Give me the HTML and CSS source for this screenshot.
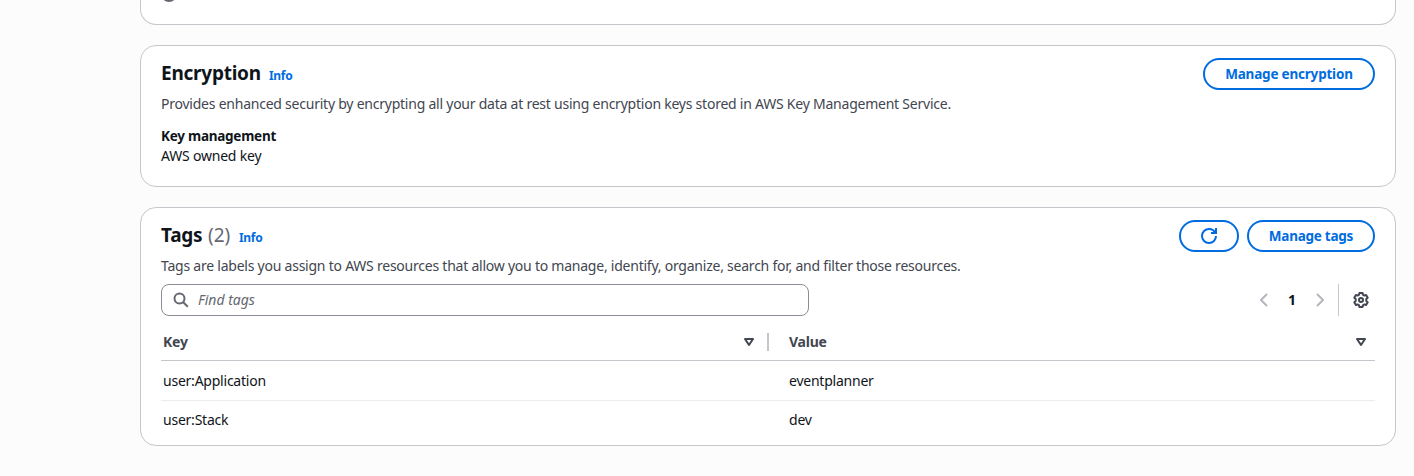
FILE: index.html
```html
<!DOCTYPE html>
<html lang="en">
<head>
<meta charset="utf-8">
<title>Encryption and tags</title>
<link rel="stylesheet" href="styles.css">
</head>
<body>
<main class="page">
  <section class="card card-previous">
    <svg class="status-icon" viewBox="0 0 16 16"><circle cx="8" cy="8" r="7"/><path d="M5 8h6"/></svg>
  </section>

  <section class="card card-encryption">
    <header class="card-header">
      <div class="title-row"><h2 class="title title-encryption">Encryption</h2><a class="info">Info</a></div>
      <button class="button button-encryption">Manage encryption</button>
    </header>
    <p class="description">Provides enhanced security by encrypting all your data at rest using encryption keys stored in AWS Key Management Service.</p>
    <dl class="pair">
      <dt>Key management</dt>
      <dd>AWS owned key</dd>
    </dl>
  </section>

  <section class="card card-tags">
    <header class="card-header">
      <div class="title-row"><h2 class="title title-tags">Tags</h2><span class="counter">(2)</span><a class="info">Info</a></div>
      <div class="actions">
        <button class="button button-refresh" aria-label="Refresh">
          <svg class="icon" viewBox="0 0 16 16"><path d="M10 5h5V0"/><path d="M15 8a6.957 6.957 0 0 1-7 7 6.957 6.957 0 0 1-7-7 6.957 6.957 0 0 1 7-7 6.87 6.87 0 0 1 6.3 4"/></svg>
        </button>
        <button class="button button-tags">Manage tags</button>
      </div>
    </header>
    <p class="description">Tags are labels you assign to AWS resources that allow you to manage, identify, organize, search for, and filter those resources.</p>
    <div class="tools">
      <div class="search">
        <svg class="icon search-icon" viewBox="0 0 16 16"><circle cx="6.500" cy="6.500" r="5"/><path d="m10.2 10.2 4.600 4.600"/></svg>
        <span class="placeholder">Find tags</span>
      </div>
      <div class="pagination">
        <svg class="icon arrow" viewBox="0 0 16 16"><path d="M11 2 5 8l6 6"/></svg>
        <span class="page-number">1</span>
        <svg class="icon arrow" viewBox="0 0 16 16"><path d="m5 2 6 6-6 6"/></svg>
        <span class="separator"></span>
        <svg class="icon gear" viewBox="0 0 16 16"><path d="M6.4 1h3.200l.3 1.700 1.500.9 1.700-.6 1.600 2.700L13.300 6.900v2.200l1.400 1.200-1.600 2.700-1.700-.6-1.500.9-.3 1.700H6.400l-.3-1.700-1.500-.9-1.700.6-1.600-2.700 1.400-1.200V6.900L1.300 5.700 2.900 3l1.700.6 1.500-.9z"/><circle cx="8" cy="8" r="2"/></svg>
      </div>
    </div>
    <div class="table">
      <div class="row head">
        <div class="cell cell-key"><span>Key</span><svg class="icon caret" viewBox="0 0 16 16"><path d="M4 5h8l-4 6z"/></svg></div>
        <div class="cell"><span>Value</span><svg class="icon caret" viewBox="0 0 16 16"><path d="M4 5h8l-4 6z"/></svg></div>
      </div>
      <div class="row data first"><div class="cell">user:Application</div><div class="cell">eventplanner</div></div>
      <div class="row data"><div class="cell">user:Stack</div><div class="cell">dev</div></div>
    </div>
  </section>
</main>
</body>
</html>
```
FILE: styles.css
```css
* { box-sizing: border-box; }
body {
  margin: 0;
  height: 476px;
  overflow: hidden;
  background: #fcfcfd;
  color: #0f141a;
  font: 14px/20px "Noto Sans", "Open Sans", sans-serif;
}
h2, p, dl, dd { margin: 0; }
.page { display: flex; flex-direction: column; gap: 20px; padding: 0 18px 0 140px; }
.card { background: #fff; border: 1px solid #c6c6cd; border-radius: 16px; padding: 12px 20px 0; }
.card-previous { height: 25px; border-top: 0; border-radius: 0 0 16px 16px; padding-top: 0; overflow: hidden; }
.status-icon { display: block; width: 16px; height: 16px; margin-top: -14px; fill: none; stroke: #656871; stroke-width: 2; }
.card-encryption { height: 142px; }
.card-tags { height: 239px; }
.card-header { display: flex; justify-content: space-between; height: 32px; }
.title-row { display: flex; align-items: baseline; padding-top: 3px; }
.title { font-size: 19px; line-height: 24px; font-weight: 700; letter-spacing: -0.25px; }
.title-encryption { width: 100px; }
.title-tags { width: 42px; }
.counter { width: 23px; margin-left: 5px; font-size: 19px; line-height: 24px; color: #656871; }
.info { margin-left: 8px; font-size: 12px; line-height: 16px; font-weight: 700; letter-spacing: -0.3px; color: #006ce0; }
.actions { display: flex; gap: 8px; }
.button {
  display: flex; align-items: center; justify-content: center;
  height: 32px; padding: 0; border: 2px solid #006ce0; border-radius: 20px;
  background: #fff; color: #006ce0; font: 700 13.5px/20px "Noto Sans", "Open Sans", sans-serif; white-space: nowrap;
}
.button-encryption { width: 172px; letter-spacing: -0.2px; }
.button-refresh { width: 60px; }
.button-tags { width: 128px; letter-spacing: -0.25px; }
.icon { display: block; flex: none; width: 16px; height: 16px; fill: none; stroke: currentColor; stroke-width: 2; }
.description { margin-top: 4px; color: #424650; white-space: nowrap; letter-spacing: -0.233px; }
.pair { margin-top: 12px; }
.pair dt { font-size: 13.5px; font-weight: 700; letter-spacing: -0.25px; }
.pair dd { letter-spacing: -0.2px; }
.tools { display: flex; justify-content: space-between; margin-top: 8px; height: 32px; }
.search { display: flex; align-items: center; gap: 9px; width: 648px; padding-left: 11px; border: 1px solid #8c8c94; border-radius: 8px; }
.search-icon { color: #656871; }
.placeholder { color: #656871; font-style: italic; }
.pagination { display: flex; align-items: center; padding-right: 6px; }
.arrow { color: #b4b4bb; }
.page-number { width: 40px; text-align: center; font-weight: 700; }
.separator { width: 1px; height: 32px; margin: 0 14px 0 10px; background: #c6c6cd; }
.gear, .caret { color: #424650; stroke-linejoin: round; }
.row { display: grid; grid-template-columns: 626px 1fr; }
.cell { display: flex; align-items: center; padding-left: 2px; letter-spacing: -0.23px; }
.head { height: 45px; padding-top: 7px; border-bottom: 1px solid #c6c6cd; color: #424650; font-weight: 700; }
.head .cell { justify-content: space-between; padding-right: 6px; }
.head .cell-key { position: relative; padding-right: 30px; }
.cell-key::after { content: ""; position: absolute; right: 18px; top: 10px; width: 2px; height: 18px; background: #c6c6cd; }
.data { height: 38px; }
.first { height: 40px; border-bottom: 1px solid #ebebf0; }
```
